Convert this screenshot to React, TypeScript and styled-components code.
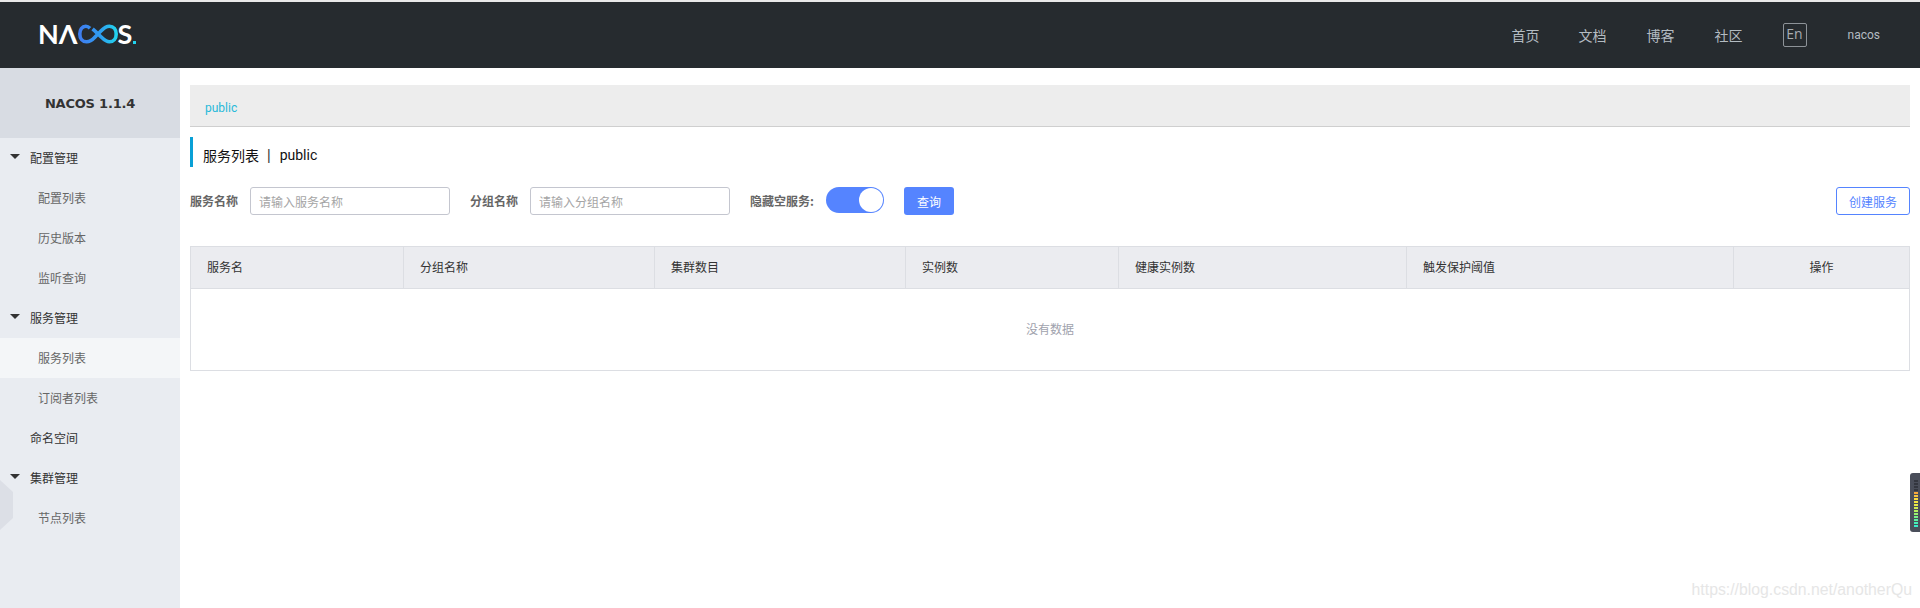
import * as React from 'react'
import styled, { createGlobalStyle } from 'styled-components'

const CJK = `'Noto Sans CJK SC', 'Noto Sans', sans-serif`

const navLinks = ['首页', '文档', '博客', '社区']

const menu = [
    { label: '配置管理', kind: 'group' },
    { label: '配置列表', kind: 'leaf' },
    { label: '历史版本', kind: 'leaf' },
    { label: '监听查询', kind: 'leaf' },
    { label: '服务管理', kind: 'group' },
    { label: '服务列表', kind: 'leaf', active: true },
    { label: '订阅者列表', kind: 'leaf' },
    { label: '命名空间', kind: 'plain' },
    { label: '集群管理', kind: 'group' },
    { label: '节点列表', kind: 'leaf' },
]

const columns = [
    { label: '服务名', width: 213 },
    { label: '分组名称', width: 251 },
    { label: '集群数目', width: 251 },
    { label: '实例数', width: 213 },
    { label: '健康实例数', width: 288 },
    { label: '触发保护阈值', width: 327 },
    { label: '操作', width: 175, center: true },
]

const meterColors = [
    '#33363f', '#33363f', '#33363f', '#33363f', '#f7a93c', '#f8c53e', '#fbdc3f', '#f6e640', '#e8ea48',
    '#d0ee52', '#b6f05e', '#98f270', '#7af288', '#5cf2a0', '#46f0b8', '#3aeccb',
]

const App: React.FC = () => (
    <Page>
        <GlobalStyle />
        <Header>
            <Logo aria-label="NACOS">
                <LogoLetters>NΛ</LogoLetters>
                <svg width="40" height="22" viewBox="0 0 40 22" fill="none">
                    <defs>
                        <linearGradient id="nacos-mark" x1="0" x2="1" y1="0" y2="0">
                            <stop offset="0" stopColor="#3f7df0" />
                            <stop offset="0.55" stopColor="#2f9cf0" />
                            <stop offset="1" stopColor="#22d3ee" />
                        </linearGradient>
                    </defs>
                    <path
                        d="M12 5.2C10.8 4 9.4 3.2 7.8 3.2C4 3.2 1.8 6.6 1.8 11C1.8 15.4 4.4 18.8 8.6 18.8C14 18.8 16 14.5 20 11C24 7.5 26 3.2 31.4 3.2C35.6 3.2 38.2 6.6 38.2 11C38.2 15.4 35.6 18.8 31.4 18.8C27 18.8 24.6 14.8 20 11C17.4 8.8 16 7 14.6 5.8"
                        stroke="url(#nacos-mark)"
                        strokeWidth="3.6"
                    />
                </svg>
                <LogoLetters>S</LogoLetters>
                <LogoDot />
            </Logo>
            <Nav>
                {navLinks.map((link) => (
                    <NavLink key={link}>{link}</NavLink>
                ))}
                <LangBox>En</LangBox>
                <UserName>nacos</UserName>
            </Nav>
        </Header>
        <Body>
            <Sidebar>
                <SideTitle>NACOS 1.1.4</SideTitle>
                {menu.map((item) => (
                    <MenuItem key={item.label} $kind={item.kind} $active={!!item.active}>
                        {item.kind === 'group' && <Caret />}
                        {item.label}
                    </MenuItem>
                ))}
                <SideHex />
            </Sidebar>
            <Main>
                <Crumbs>
                    <CrumbLink>public</CrumbLink>
                </Crumbs>
                <PageTitle>
                    <span>服务列表</span>
                    <TitleSep>|</TitleSep>
                    <span>public</span>
                </PageTitle>
                <Filters>
                    <FieldLabel>服务名称</FieldLabel>
                    <TextInput placeholder="请输入服务名称" />
                    <FieldLabel $offset={20}>分组名称</FieldLabel>
                    <TextInput placeholder="请输入分组名称" />
                    <FieldLabel $offset={20}>隐藏空服务:</FieldLabel>
                    <Switch>
                        <SwitchKnob />
                    </Switch>
                    <QueryButton>查询</QueryButton>
                    <CreateButton>创建服务</CreateButton>
                </Filters>
                <Table>
                    <TableHead>
                        {columns.map((col) => (
                            <HeadCell key={col.label} $width={col.width} $center={!!col.center}>
                                {col.label}
                            </HeadCell>
                        ))}
                    </TableHead>
                    <EmptyRow>没有数据</EmptyRow>
                </Table>
            </Main>
        </Body>
        <MeterWidget>
            {meterColors.map((color, i) => (
                <MeterBar key={i} $color={color} />
            ))}
        </MeterWidget>
        <Watermark>https://blog.csdn.net/anotherQu</Watermark>
    </Page>
)

export default App

const GlobalStyle = createGlobalStyle`
    html, body {
        margin: 0;
        padding: 0;
        background: #fff;
    }
    * {
        box-sizing: border-box;
    }
`

const Page = styled.div`
    position: relative;
    display: flex;
    flex-direction: column;
    height: 608px;
    overflow: hidden;
    border-top: 2px solid #e9e9e9;
    font-family: ${CJK};
    font-size: 12px;
    color: #333;
`

const Header = styled.header`
    display: flex;
    align-items: center;
    justify-content: space-between;
    flex: 0 0 66px;
    padding: 0 40px 0 38px;
    background: #262b2f;
`

const Logo = styled.div`
    display: flex;
    align-items: center;
    height: 22px;
    margin-top: -3px;
`

const LogoLetters = styled.span`
    font-family: Lato, 'Open Sans', sans-serif;
    font-size: 27px;
    font-weight: 700;
    line-height: 22px;
    color: #fff;
`

const LogoDot = styled.span`
    width: 3px;
    height: 3px;
    margin: 17px 0 0 1px;
    background: #22d3ee;
`

const Nav = styled.nav`
    display: flex;
    align-items: center;
`

const NavLink = styled.a`
    width: 28px;
    margin-right: 40px;
    font-size: 14px;
    line-height: 20px;
    color: #b4bcc2;
    white-space: nowrap;
    &:first-child {
        margin-right: 39px;
    }
`

const LangBox = styled.div`
    width: 24px;
    height: 24px;
    border: 1px solid #8d9398;
    border-radius: 2px;
    font-family: 'Open Sans', sans-serif;
    font-size: 14px;
    line-height: 20px;
    text-align: center;
    color: #a7adb2;
`

const UserName = styled.div`
    margin-left: 41px;
    font-family: Roboto, sans-serif;
    font-size: 12px;
    color: #b4bcc2;
`

const Body = styled.div`
    display: flex;
    flex: 1;
    min-height: 0;
`

const Sidebar = styled.aside`
    position: relative;
    flex: 0 0 180px;
    background: #e9ecf1;
`

const SideTitle = styled.div`
    display: flex;
    align-items: center;
    justify-content: center;
    height: 70px;
    background: #d8dce3;
    font-family: 'DejaVu Sans', sans-serif;
    font-size: 13px;
    font-weight: 700;
    letter-spacing: -0.2px;
    color: #333;
`

const MenuItem = styled.div<{ $kind: string; $active: boolean }>`
    position: relative;
    height: 40px;
    padding-left: ${(p) => (p.$kind === 'leaf' ? '38px' : '30px')};
    font-size: 12px;
    line-height: 40px;
    color: ${(p) => (p.$kind === 'leaf' ? '#666' : '#333')};
    background: ${(p) => (p.$active ? '#f4f6f8' : 'transparent')};
`

const Caret = styled.i`
    position: absolute;
    left: 10px;
    top: 16px;
    border-top: 5px solid #333;
    border-left: 5px solid transparent;
    border-right: 5px solid transparent;
`

const SideHex = styled.div`
    position: absolute;
    left: 0;
    top: 412px;
    width: 13px;
    height: 50px;
    background: #dcdfe6;
    clip-path: polygon(0 0, 100% 24%, 100% 76%, 0 100%);
`

const Main = styled.main`
    flex: 1;
    min-width: 0;
    padding: 17px 10px 0;
`

const Crumbs = styled.div`
    display: flex;
    align-items: center;
    height: 42px;
    padding: 4px 15px 0;
    background: #ededed;
    border-bottom: 1px solid #cfcfcf;
`

const CrumbLink = styled.a`
    font-family: Roboto, sans-serif;
    font-size: 12px;
    color: #27b9d9;
`

const PageTitle = styled.div`
    display: flex;
    align-items: center;
    height: 30px;
    margin-top: 10px;
    padding: 5px 0 0 10px;
    border-left: 3px solid #09a0d6;
    font-family: Roboto, ${CJK};
    font-size: 14px;
    color: #111;
`

const TitleSep = styled.span`
    margin: 0 9px 0 8px;
    font-family: 'Liberation Sans', sans-serif;
    color: #333;
`

const Filters = styled.div`
    display: flex;
    align-items: flex-start;
    height: 28px;
    margin-top: 20px;
`

const FieldLabel = styled.label<{ $offset?: number }>`
    margin-left: ${(p) => p.$offset ?? 0}px;
    margin-right: 12px;
    font-size: 12px;
    font-weight: 700;
    line-height: 28px;
    color: #666;
    white-space: nowrap;
`

const TextInput = styled.input`
    width: 200px;
    height: 28px;
    padding: 0 8px;
    border: 1px solid #c4c6cf;
    border-radius: 3px;
    outline: none;
    font-family: ${CJK};
    font-size: 12px;
    color: #333;
    &::placeholder {
        color: #a5a5a5;
    }
`

const Switch = styled.div`
    position: relative;
    width: 58px;
    height: 26px;
    background: #5584ff;
    border-radius: 13px;
`

const SwitchKnob = styled.span`
    position: absolute;
    right: 1px;
    top: 1px;
    width: 24px;
    height: 24px;
    background: #fff;
    border-radius: 50%;
`

const QueryButton = styled.button`
    width: 50px;
    height: 28px;
    margin-left: 20px;
    padding: 0;
    border: none;
    border-radius: 3px;
    background: #5584ff;
    font-family: ${CJK};
    font-size: 12px;
    color: #fff;
`

const CreateButton = styled.button`
    width: 74px;
    height: 28px;
    margin-left: auto;
    padding: 0;
    border: 1px solid #5584ff;
    border-radius: 3px;
    background: #fff;
    font-family: ${CJK};
    font-size: 12px;
    color: #5584ff;
`

const Table = styled.div`
    margin-top: 31px;
    border: 1px solid #dcdee3;
`

const TableHead = styled.div`
    display: flex;
    height: 42px;
    background: #ebecf0;
    border-bottom: 1px solid #dcdee3;
`

const HeadCell = styled.div<{ $width: number; $center: boolean }>`
    flex: 0 0 ${(p) => p.$width}px;
    padding: 0 16px;
    border-right: 1px solid #dcdee3;
    font-size: 12px;
    line-height: 40px;
    color: #333;
    text-align: ${(p) => (p.$center ? 'center' : 'left')};
    &:last-child {
        flex: 1;
        border-right: none;
    }
`

const EmptyRow = styled.div`
    height: 81px;
    font-size: 12px;
    line-height: 80px;
    text-align: center;
    color: #a0a2ad;
`

const MeterWidget = styled.div`
    position: absolute;
    right: 0;
    top: 471px;
    display: flex;
    flex-direction: column;
    gap: 1px;
    width: 10px;
    height: 59px;
    padding: 7px 0 0 4px;
    background: #4a4e5a;
    border-radius: 3px 0 0 3px;
`

const MeterBar = styled.span<{ $color: string }>`
    flex: 0 0 2px;
    width: 4px;
    background: ${(p) => p.$color};
`

const Watermark = styled.div`
    position: absolute;
    right: 8px;
    top: 578px;
    font-family: 'Liberation Sans', Arial, sans-serif;
    font-size: 15.8px;
    line-height: 20px;
    color: #e6e6e6;
`
